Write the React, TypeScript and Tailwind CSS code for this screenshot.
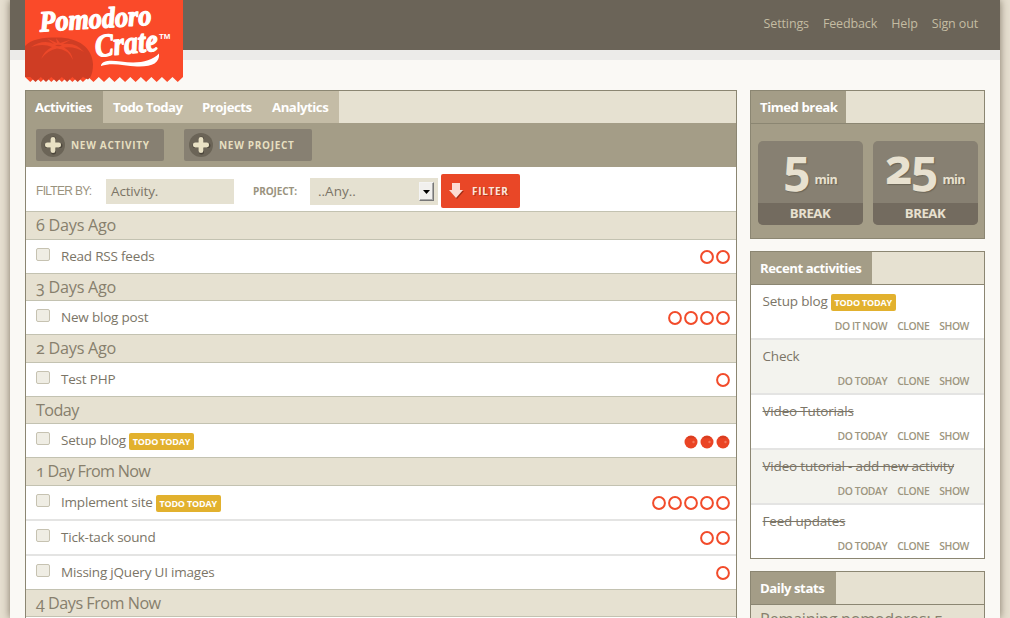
import type { ReactNode } from 'react';

type Item = { name: string; badge?: boolean; total: number; filled?: boolean };
type Group = { title: string; height: string; tracking: string; items: Item[] };

const groups: Group[] = [
  { title: '6 Days Ago', height: 'h-[29px]', tracking: 'tracking-[-0.25px]', items: [{ name: 'Read RSS feeds', total: 2 }] },
  { title: '3 Days Ago', height: 'h-[28px]', tracking: 'tracking-[-0.25px]', items: [{ name: 'New blog post', total: 4 }] },
  { title: '2 Days Ago', height: 'h-[29px]', tracking: 'tracking-[-0.25px]', items: [{ name: 'Test PHP', total: 1 }] },
  { title: 'Today', height: 'h-[28px]', tracking: 'tracking-[-0.6px]', items: [{ name: 'Setup blog', badge: true, total: 3, filled: true }] },
  {
    title: '1 Day From Now',
    height: 'h-[29px]',
    tracking: 'tracking-[-0.75px]',
    items: [
      { name: 'Implement site', badge: true, total: 5 },
      { name: 'Tick-tack sound', total: 2 },
      { name: 'Missing jQuery UI images', total: 1 },
    ],
  },
  { title: '4 Days From Now', height: 'h-[28px]', tracking: 'tracking-[-0.5px]', items: [] },
];

const recent = [
  { name: 'Setup blog', badge: true, action: 'DO IT NOW', done: false },
  { name: 'Check', badge: false, action: 'DO TODAY', done: false },
  { name: 'Video Tutorials', badge: false, action: 'DO TODAY', done: true },
  { name: 'Video tutorial - add new activity', badge: false, action: 'DO TODAY', done: true },
  { name: 'Feed updates', badge: false, action: 'DO TODAY', done: true },
];

function Badge() {
  return (
    <span className="flex h-[17px] w-[65px] items-center justify-center rounded-[2px] bg-[#e2b12e] text-[9px] font-bold tracking-[-0.2px] whitespace-nowrap text-white">
      TODO TODAY
    </span>
  );
}

function Dot({ filled }: { filled?: boolean }) {
  return filled ? (
    <svg width="14" height="14" viewBox="0 0 14 14" className="translate-y-[1px]">
      <circle cx="7" cy="7" r="6.500" fill="#ea4424" />
      <path d="M2.600 2.800Q7 -.600 11.400 2.800Q9 3.800 7 3Q5 3.800 2.600 2.800Z" fill="#d63d20" />
      <circle cx="9.500" cy="7" r="1.200" fill="#f4765a" />
    </svg>
  ) : (
    <svg width="14" height="14" viewBox="0 0 14 14">
      <circle cx="7" cy="7" r="5.9" fill="#fff" stroke="#f24b2a" strokeWidth="2" />
    </svg>
  );
}

function Logo() {
  const teeth = Array.from({ length: 15 }, (_, i) => {
    const x = 158 - i * 10.533;
    return `L${(x - 5.27).toFixed(2)} 82L${(x - 10.533).toFixed(2)} 77`;
  }).join('');
  return (
    <svg width="158" height="83" viewBox="0 0 158 83" className="block">
      <path d={`M0 0H158V77${teeth}Z`} fill="#fa4a29" />
      <path d="M0 46C6 39 18 37.500 32 37.500C54 37.500 67 48 68 64C68 70 67 74 65.500 77L63 79.500L57.900 77L52.700 82L47.400 77L42.100 82L36.900 77L31.600 82L26.300 77L21 82L15.800 77L10.500 82L5.270 77L0 77Z" fill="#cf3d24" />
      <g fill="#ed4829">
        <path d="M29 44Q18 39 6 47Q18 43 27 47Q20 50 16 59Q23 50 32 48.500Q43 49 48 60Q47 52 39 47.500Q50 46 59 52Q51 42 38 44L46 39.500L35 43L31 38L32 43L22 38.500Z" />
      </g>
      <path d="M30 45.500Q33 43.800 37 45.500Q34 47 30 45.500Z" fill="#cf3d24" />
      <g fill="#fff" stroke="#fff" strokeWidth="1.3" strokeLinejoin="round" fontFamily="Liberation Serif, serif" fontStyle="italic" fontWeight="700">
        <text x="15" y="31.500" fontSize="29" textLength="112" lengthAdjust="spacingAndGlyphs" transform="rotate(-3.500 15 31.500)">Pomodoro</text>
        <text x="71" y="57" fontSize="32" textLength="63" lengthAdjust="spacingAndGlyphs" transform="rotate(-6 71 57)">Crate</text>
      </g>
      <path d="M76 65C78 60 86 60 96 61.500C112 64 126 62 134 53.500C135 63 127 67 112 66.500C98 65.500 87 62 76 66Z" fill="#fff" />
      <text x="134" y="38.500" fontSize="8" fontWeight="700" fill="#fff" fontFamily="Liberation Sans, sans-serif" textLength="11.500" lengthAdjust="spacingAndGlyphs">TM</text>
    </svg>
  );
}

function ToolbarButton({ children }: { children: ReactNode }) {
  return (
    <button className="flex h-8 w-32 items-center rounded-[2px] bg-[#878072] pl-[5px] text-[10px] font-bold text-[#e6dfc0]">
      <svg width="24" height="24" viewBox="0 0 24 24" className="mr-[6px] shrink-0">
        <circle cx="12" cy="12" r="12" fill="#6b6457" />
        <path d="M12.500 6V19M6 12.500H19" stroke="#4c463b" strokeWidth="5" strokeLinecap="round" />
        <path d="M12 6.300V17.700M6.300 12H17.700" stroke="#e9e1c4" strokeWidth="4.800" strokeLinecap="round" />
      </svg>
      <span className="tracking-[0.7px] whitespace-nowrap">{children}</span>
    </button>
  );
}

function SideHeader({ title, width }: { title: string; width: string }) {
  return (
    <div className="flex h-[33px] border-b border-[#8b8672] bg-[#e6e1d1]">
      <h2 className={`${width} flex items-center bg-[#a49d87] pt-[2px] pl-[9px] text-[13.2px] font-bold tracking-[-0.45px] whitespace-nowrap text-white`}>
        {title}
      </h2>
    </div>
  );
}

function BreakButton({ minutes }: { minutes: string }) {
  return (
    <button className="flex h-[84px] w-[105px] flex-col rounded-[5px] bg-[#878072] text-[#e8e1d0]">
      <span className="flex h-[62px] w-full items-baseline justify-center gap-[6px] [text-shadow:1px_1px_1px_#6b6457]">
        <span className="text-[48px] leading-[49px] font-bold tracking-[-2px]">{minutes}</span>
        <span className="mr-[1px] text-[12.5px] font-bold tracking-[-0.6px]">min</span>
      </span>
      <span className="flex w-full flex-1 items-center justify-center rounded-b-[5px] bg-[#736b5f] pr-[1px] pb-[1px] text-[13.2px] font-bold tracking-[-0.5px]">
        BREAK
      </span>
    </button>
  );
}

export default function App() {
  return (
    <div className="h-[618px] w-[1010px] overflow-hidden bg-[#e6dfd0] px-[10px] font-['Open_Sans',sans-serif] text-[#7b7567] [font-feature-settings:'onum']">
      <div className="h-full bg-[#faf9f5] shadow-[0_0_8px_rgba(70,60,40,0.65)]">
        <header className="flex h-[60px] justify-between border-b-[10px] border-[#ecebe9] bg-[#6b6458] pr-[22px] pl-[15px]">
          <div className="relative z-10 h-[50px] w-[158px]">
            <Logo />
          </div>
          <nav className="flex h-[48px] items-center gap-[14px] text-[12.5px] tracking-[-0.13px] text-[#c4bca2]">
            <a>Settings</a>
            <a>Feedback</a>
            <a>Help</a>
            <a>Sign out</a>
          </nav>
        </header>

        <div className="flex items-start gap-[13px] pt-[30px] pl-[15px]">
          <main className="min-h-[540px] w-[712px] border border-[#8b8672] bg-white">
            <div className="flex h-8 bg-[#e6e1d1] text-[13.2px] font-bold tracking-[-0.45px] whitespace-nowrap text-white">
              <a className="flex w-[77px] items-center bg-[#a49d87] pt-[2px] pl-[9px]">Activities</a>
              <a className="flex w-[90px] items-center bg-[#c4bca6] pt-[2px] pl-[10px] tracking-[-0.6px]">Todo Today</a>
              <a className="flex w-[70px] items-center bg-[#c4bca6] pt-[2px] pl-[9px]">Projects</a>
              <a className="flex w-[76px] items-center bg-[#c4bca6] pt-[2px] pl-[9px]">Analytics</a>
            </div>
            <div className="flex h-11 gap-5 bg-[#a49d87] pt-[6px] pl-[10px]">
              <ToolbarButton>NEW ACTIVITY</ToolbarButton>
              <ToolbarButton>NEW PROJECT</ToolbarButton>
            </div>
            <div className="flex h-11 items-center bg-white pt-[4px] pl-[10px]">
              <span className="w-[70px] font-['Liberation_Sans',sans-serif] text-[12px] tracking-[-0.7px] text-[#9a937e]">FILTER BY:</span>
              <div className="mt-[1px] flex h-[25px] w-32 items-center bg-[#e5e1d1] pl-[5px] text-[13.5px] tracking-[-0.15px] text-[#7b7567]">Activity.</div>
              <span className="ml-[19px] w-[57px] text-[10px] font-bold tracking-[-0.1px] text-[#9a937e]">PROJECT:</span>
              <div className="mt-[1px] flex h-[27px] w-32 items-center justify-between bg-[#e5e1d1] pr-1 pl-2 text-[13.5px]">
                <span>..Any..</span>
                <span className="flex h-[19px] w-[15px] items-center justify-center border border-t-[#f4f4f4] border-r-[#777] border-b-[#777] border-l-[#f4f4f4] bg-[#f1f0ee] shadow-[inset_-1px_-1px_0_#aaa]">
                  <svg width="7" height="4" viewBox="0 0 7 4">
                    <path d="M0 0H7L3.500 4Z" fill="#000" />
                  </svg>
                </span>
              </div>
              <button className="ml-[3px] flex h-[34px] w-[79px] items-center rounded-[2px] bg-[#e94727] pl-2 text-[10px] font-bold tracking-[0.7px] text-[#fbe6dc]">
                <svg width="15" height="18" viewBox="0 0 15 18" className="mr-2">
                  <path d="M4 2H11V9H15L8 17L1 9H4Z" fill="#a12d15" />
                  <path d="M3 1H11V8H14L7 16L0 8H3Z" fill="#fcdcd3" />
                </svg>
                <span className="[text-shadow:1px_1px_0_#b5341a]">FILTER</span>
              </button>
            </div>

            {groups.map((group) => (
              <section key={group.title}>
                <h3 className={`${group.height} ${group.tracking} flex items-center border-y border-[#c3c2b1] bg-[#e6e1d1] pl-[10px] text-[16.2px] text-[#877f6d]`}>
                  {group.title}
                </h3>
                {group.items.map((item, i) => (
                  <div key={item.name} className={i > 0 ? 'border-t-2 border-[#e4e4e3]' : ''}>
                    <div className="flex h-[33px] items-center pr-[6px] pl-[10px]">
                      <span className="mb-[4px] h-[13px] w-[14px] rounded-[2px] border border-[#c6c2b1] bg-[#efede4]" />
                      <span className="mr-[3px] ml-[11px] text-[13.5px] tracking-[-0.2px]">{item.name}</span>
                      {item.badge && (
                        <span className="mt-[2px]">
                          <Badge />
                        </span>
                      )}
                      <span className="mt-[1px] ml-auto flex gap-[2px]">
                        {Array.from({ length: item.total }, (_, n) => (
                          <Dot key={n} filled={item.filled} />
                        ))}
                      </span>
                    </div>
                  </div>
                ))}
              </section>
            ))}
          </main>

          <aside className="flex w-[235px] flex-col gap-3">
            <section className="h-[149px] border border-[#8b8672] bg-[#a49d87]">
              <SideHeader title="Timed break" width="w-[95px]" />
              <div className="flex gap-[10px] pt-[17px] pl-[7px]">
                <BreakButton minutes="5" />
                <BreakButton minutes="25" />
              </div>
            </section>

            <section className="h-[308px] border border-[#8b8672] bg-white">
              <SideHeader title="Recent activities" width="w-[121px]" />
              {recent.map((item, i) => (
                <div
                  key={item.name}
                  className={`flex flex-col pt-[8px] pr-[15px] pl-[11.5px] ${i < 4 ? 'h-[55px] border-b-2 border-[#e4e4e3]' : 'h-[53px]'} ${i % 2 ? 'bg-[#f3f3ee]' : 'bg-white'}`}
                >
                  <div className="flex h-[17px] items-center gap-[3px]">
                    <span className={`text-[13.5px] tracking-[-0.18px] whitespace-nowrap ${item.done ? 'line-through' : ''}`}>{item.name}</span>
                    {item.badge && (
                      <span className="mt-[2px]">
                        <Badge />
                      </span>
                    )}
                  </div>
                  <div className="mt-[8px] flex h-[17px] items-center justify-end gap-[10px] text-[10.4px] font-semibold tracking-[-0.45px] whitespace-nowrap text-[#9d9680]">
                    <a>{item.action}</a>
                    <a>CLONE</a>
                    <a>SHOW</a>
                  </div>
                </div>
              ))}
            </section>

            <section className="border border-[#8b8672] bg-[#e6e1d1]">
              <SideHeader title="Daily stats" width="w-[85px]" />
              <p className="pt-[2px] pl-[9px] text-[16.2px] tracking-[-0.3px] whitespace-nowrap text-[#877f6d]">Remaining pomodoros: 5</p>
            </section>
          </aside>
        </div>
      </div>
    </div>
  );
}
